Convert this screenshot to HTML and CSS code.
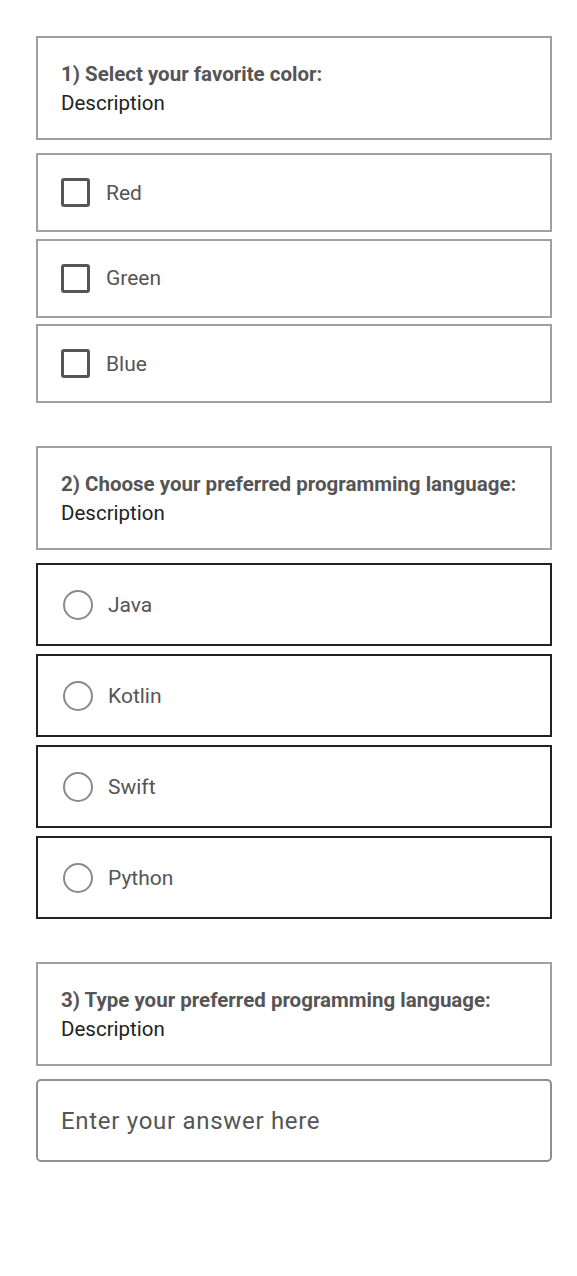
FILE: index.html
```html
<!DOCTYPE html>
<html>
<head>
<meta charset="utf-8">
<link rel="stylesheet" href="styles.css">
</head>
<body>
<main class="form">
  <section class="question">
    <div class="q-head">
      <div class="q-title">1) Select your favorite color:</div>
      <div class="q-desc">Description</div>
    </div>
    <div class="opt opt-check"><span class="checkbox"></span><span class="opt-label">Red</span></div>
    <div class="opt opt-check"><span class="checkbox"></span><span class="opt-label">Green</span></div>
    <div class="opt opt-check"><span class="checkbox"></span><span class="opt-label">Blue</span></div>
  </section>
  <section class="question">
    <div class="q-head">
      <div class="q-title">2) Choose your preferred programming language:</div>
      <div class="q-desc">Description</div>
    </div>
    <div class="opt opt-radio"><span class="radio"></span><span class="opt-label">Java</span></div>
    <div class="opt opt-radio"><span class="radio"></span><span class="opt-label">Kotlin</span></div>
    <div class="opt opt-radio"><span class="radio"></span><span class="opt-label">Swift</span></div>
    <div class="opt opt-radio"><span class="radio"></span><span class="opt-label">Python</span></div>
  </section>
  <section class="question">
    <div class="q-head">
      <div class="q-title">3) Type your preferred programming language:</div>
      <div class="q-desc">Description</div>
    </div>
    <div class="answer"><span class="placeholder">Enter your answer here</span></div>
  </section>
</main>
</body>
</html>
```

FILE: styles.css
```css
html, body {
  margin: 0;
  padding: 0;
  background: #ffffff;
}
body {
  font-family: Roboto, "Liberation Sans", sans-serif;
}
.form {
  display: flex;
  flex-direction: column;
  gap: 43px;
  padding: 36px 26px 0 36px;
  width: 516px;
}
.question {
  display: flex;
  flex-direction: column;
  gap: 8px;
}
.q-head {
  border: 2px solid #a0a0a0;
  padding: 22px 22px 22px 23px;
  height: 56px;
  line-height: 29px;
  font-size: 20.5px;
  margin-bottom: 5px;
}
.q-title {
  font-weight: 700;
  color: #555555;
}
.q-desc {
  color: #222222;
}
.opt {
  display: flex;
  align-items: center;
  font-size: 21px;
  color: #555555;
}
.opt-check {
  border: 2px solid #a0a0a0;
  height: 75px;
  padding-left: 23px;
  gap: 16px;
}
.opt-check + .opt-check { margin-top: -1.5px; }
.checkbox {
  width: 23px;
  height: 23px;
  border: 3px solid #555555;
  border-radius: 3px;
  flex: none;
}
.opt-radio {
  border: 2px solid #222222;
  height: 79px;
  padding-left: 25px;
  gap: 15px;
}
.radio {
  width: 26px;
  height: 26px;
  border: 2.5px solid #8a8a8a;
  border-radius: 50%;
  flex: none;
}
.answer {
  border: 2px solid #8f8f8f;
  border-radius: 5px;
  height: 79px;
  display: flex;
  align-items: center;
  padding-left: 23px;
}
.placeholder {
  font-size: 24px;
  letter-spacing: 0.7px;
  color: #555555;
}
```
